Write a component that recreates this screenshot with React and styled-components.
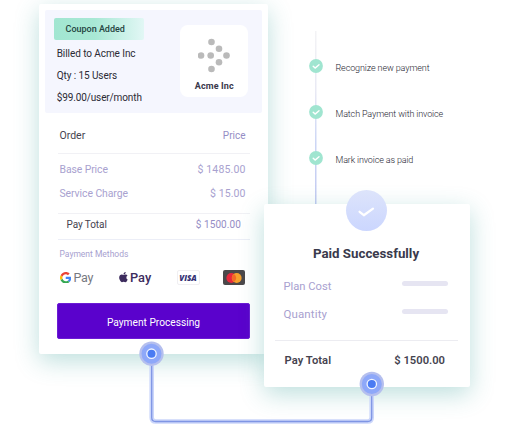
import React from "react";
import styled, { createGlobalStyle } from "styled-components";

const GlobalStyle = createGlobalStyle`
  body { margin: 0; background: #fff; }
  * { box-sizing: border-box; }
`;

const Page = styled.main`
  position: relative;
  display: flex;
  align-items: flex-start;
  width: 520px;
  height: 435px;
  padding: 4px 0 0 39px;
  overflow: hidden;
  font-family: Roboto, "Noto Sans", sans-serif;
  color: #45434f;
`;

const Card = styled.section`
  background: #fff;
  border-radius: 2px;
  box-shadow: 0 7px 24px rgba(50, 155, 148, 0.32);
`;

const InvoiceCard = styled(Card)`
  width: 228.5px;
  height: 350px;
  padding: 6px 6px 0;
  flex-shrink: 0;
`;

const Text = styled.span`
  display: block;
  white-space: pre;
  font-size: ${(p) => p.$size || 10}px;
  font-weight: ${(p) => p.$weight || 400};
  letter-spacing: ${(p) => p.$track || 0}px;
  color: ${(p) => p.$color || "inherit"};
`;

const Summary = styled.header`
  display: flex;
  justify-content: space-between;
  height: 103px;
  padding: 8px 13.5px 0 9px;
  background: #f5f6fe;
  border-radius: 2px;
`;

const Details = styled.div`
  display: flex;
  flex-direction: column;
`;

const Coupon = styled.div`
  display: flex;
  align-items: center;
  width: 90px;
  height: 22px;
  margin-bottom: 2px;
  padding-left: 11.5px;
  border-radius: 2px;
  background: linear-gradient(90deg, #a2e6d1 0%, #a8e8d5 45%, #e2f7f5 100%);
`;

const Detail = styled.div`
  display: flex;
  align-items: center;
  height: 22.2px;
  padding-left: 2.7px;
  color: #2b2a34;
`;

const CompanyTile = styled.div`
  display: flex;
  flex-direction: column;
  align-items: center;
  width: 68.5px;
  height: 72px;
  margin-top: 7px;
  padding: 13px 0 0 1px;
  border-radius: 8px;
  background: #fff;

  svg { margin: 0 0 8px; }
`;

const Body = styled.div`
  padding: 0 12px 0 12.5px;
`;

const Row = styled.div`
  display: flex;
  align-items: center;
  justify-content: space-between;
  height: ${(p) => p.$height}px;
  padding: ${(p) => p.$top || 0}px ${(p) => p.$right ?? 4}px 0 ${(p) => p.$left ?? 2}px;
`;

const Rule = styled.hr`
  height: 1px;
  margin: 0;
  border: 0;
  background: ${(p) => p.$color || "#f1f1f5"};
`;

const Charges = styled.div`
  padding: 3px 0 8px;
`;

const Methods = styled.div`
  display: flex;
  align-items: center;
  height: 18px;
  padding-left: 2px;
`;

const Wallet = styled.div`
  display: flex;
  align-items: center;
  gap: ${(p) => p.$gap}px;
  width: ${(p) => p.$width}px;
`;

const VisaBadge = styled.div`
  display: grid;
  place-items: center;
  width: 23px;
  height: 15px;
  margin-right: 23px;
  border: 1px solid #f0eff2;
  border-radius: 2px;
  color: #343174;
  font: italic 800 8px/1 "Open Sans", sans-serif;
  letter-spacing: 0;
`;

const MastercardBadge = styled.div`
  display: grid;
  place-items: center;
  width: 22.5px;
  height: 15px;
  border-radius: 2px;
  background: #4b484a;
`;

const PayButton = styled.button`
  display: grid;
  place-items: center;
  width: 193px;
  height: 36.5px;
  margin: 16px 0 0 -0.5px;
  padding: 3px 0 0;
  border: 1px solid #6c1cd4;
  border-radius: 2px;
  background: #5a02cc;
  color: #fff;
  font-family: inherit;
`;

const Side = styled.div`
  display: flex;
  flex-direction: column;
  width: 205.5px;
  margin-left: -3.5px;
  flex-shrink: 0;
`;

const Timeline = styled.ol`
  display: flex;
  flex-direction: column;
  height: 200px;
  margin: 0;
  padding: 39px 0 0 44.5px;
  list-style: none;
  background: linear-gradient(#f3f3f5, #e8e9f4 35%, #ccd6f5 65%, #c3caf1) 51px 27px / 1.5px 173px no-repeat;
`;

const Step = styled.li`
  display: flex;
  align-items: center;
  gap: 13px;
  height: 46px;
`;

const StepLabel = styled(Text)`
  margin-top: 3px;
`;

const SuccessCard = styled(Card)`
  position: relative;
  height: 183px;
  padding: 40px 12px 0 10.5px;
`;

const StatusBadge = styled.div`
  position: absolute;
  top: -14px;
  left: 81.5px;
  display: grid;
  place-items: center;
  width: 41px;
  height: 41px;
  border-radius: 50%;
  background: linear-gradient(#dde4fb, #cbd6fe);
`;

const Title = styled.h2`
  margin: 0 0 8px;
  font-size: 13.3px;
  font-weight: 700;
  line-height: 20px;
  text-align: center;
  color: #3a3a4c;
`;

const Placeholder = styled.span`
  width: 46.5px;
  height: 5px;
  margin-top: -5px;
  border-radius: 3px;
  background: #e6e5f2;
`;

const Connector = styled.svg`
  position: absolute;
  inset: 0;
  pointer-events: none;
`;

const lilac = "#a8a1cf";
const violet = "#958dc5";

const steps = [
  { label: "Recognize new payment", track: -0.11 },
  { label: "Match Payment with invoice", track: -0.13 },
  { label: "Mark invoice as paid", track: -0.14 },
];

const dots = [[13.5, 4], [21, 10.7], [3, 17.5], [12.7, 17.5], [28.5, 17.5], [21, 24.2], [13.5, 31]];

const CompanyLogo = () => (
  <svg width="32" height="35" viewBox="0 0 32 35" fill="#bababa">
    {dots.map(([x, y]) => <circle key={`${x}-${y}`} cx={x} cy={y} r="3.3" />)}
  </svg>
);

const GoogleLogo = () => (
  <svg width="11.5" height="11.5" viewBox="0 0 48 48">
    <path fill="#ea4335" d="M24 9.5c3.54 0 6.71 1.22 9.21 3.6l6.85-6.85C35.9 2.38 30.47 0 24 0 14.62 0 6.51 5.38 2.56 13.22l7.98 6.19C12.43 13.72 17.74 9.5 24 9.5z" />
    <path fill="#4285f4" d="M46.98 24.55c0-1.57-.15-3.09-.38-4.55H24v9.02h12.94c-.58 2.96-2.26 5.48-4.78 7.18l7.73 6c4.51-4.18 7.09-10.36 7.09-17.65z" />
    <path fill="#fbbc05" d="M10.53 28.59A14.5 14.5 0 0 1 9.77 24c0-1.6.27-3.14.76-4.59l-7.98-6.19A23.9 23.9 0 0 0 0 24c0 3.88.92 7.54 2.56 10.78z" />
    <path fill="#34a853" d="M24 48c6.48 0 11.93-2.13 15.89-5.81l-7.73-6c-2.15 1.45-4.92 2.3-8.16 2.3-6.26 0-11.57-4.22-13.47-9.91l-7.98 6.19C6.51 42.62 14.62 48 24 48z" />
  </svg>
);

const AppleLogo = () => (
  <svg width="9" height="11" viewBox="0 0 384 480" fill="#3d2c5e">
    <path d="M318 236c0-37 17-65 51-85-19-27-48-42-86-45-36-3-75 21-89 21-15 0-49-20-76-20C62 108 3 152 3 240c0 26 5 53 14 81 13 36 58 125 106 123 25 0 42-18 75-18 31 0 47 18 75 18 48 0 89-81 101-117-64-31-56-89-56-91zM262 73c27-32 24-61 24-73-24 2-52 17-67 35-18 20-28 44-26 71 26 2 49-11 69-33z" />
  </svg>
);

const StepCheck = () => (
  <svg width="14" height="14" viewBox="0 0 14 14">
    <circle cx="7" cy="7" r="6.9" fill="#a0e5d0" />
    <path d="M4.2 7.2 6.1 9.1 10 5.7" fill="none" stroke="#fff" strokeWidth="1.4" strokeLinecap="round" strokeLinejoin="round" />
  </svg>
);

const Node = ({ x, y }) => (
  <g transform={`translate(${x} ${y})`}>
    <circle r="12.2" fill="#b5bfee" />
    <circle r="10" fill="#8ea8f9" />
    <circle r="4.7" fill="#4a7bf3" stroke="#f1f5ff" strokeWidth="1.3" />
  </g>
);

export default function App() {
  return (
    <>
      <GlobalStyle />
      <Page>
        <InvoiceCard>
          <Summary>
            <Details>
              <Coupon><Text $size={9} $weight={500} $color="#24443f">Coupon Added</Text></Coupon>
              <Detail><Text $track={-0.07}>Billed to Acme Inc</Text></Detail>
              <Detail><Text $track={-0.08}>Qty : 15 Users</Text></Detail>
              <Detail><Text $track={-0.12}>$99.00/user/month</Text></Detail>
            </Details>
            <CompanyTile>
              <CompanyLogo />
              <Text $size={9} $weight={700} $track={0.12} $color="#39374a">Acme Inc</Text>
            </CompanyTile>
          </Summary>
          <Body>
            <Row $height={40} $top={4}>
              <Text $size={10.5}>Order</Text>
              <Text $color={violet}>Price</Text>
            </Row>
            <Rule />
            <Charges>
              <Row $height={24}>
                <Text $size={10.4} $track={-0.08} $color={lilac}>Base Price</Text>
                <Text $size={10.5} $track={0.15} $color={lilac}>$ 1485.00</Text>
              </Row>
              <Row $height={24}>
                <Text $size={10.4} $track={-0.06} $color={lilac}>Service Charge</Text>
                <Text $size={10.5} $track={0.08} $color={lilac}>$ 15.00</Text>
              </Row>
            </Charges>
            <Rule />
            <Row $height={20} $left={9} $right={8.5}>
              <Text $track={-0.08}>Pay Total</Text>
              <Text $track={0.1} $color={violet}>$ 1500.00</Text>
            </Row>
            <Row $height={4.5} />
            <Rule $color="#eceef7" />
            <Row $height={29}>
              <Text $size={8.5} $color={lilac}>Payment Methods</Text>
            </Row>
            <Methods>
              <Wallet $gap={2.5} $width={59.5}>
                <GoogleLogo />
                <Text $size={12.5} $track={-0.25} $color="#77797f">Pay</Text>
              </Wallet>
              <Wallet $gap={2} $width={57.5}>
                <AppleLogo />
                <Text $size={12.8} $weight={500} $color="#3d2c5e">Pay</Text>
              </Wallet>
              <VisaBadge>VISA</VisaBadge>
              <MastercardBadge>
                <svg width="16" height="10" viewBox="0 0 16 10">
                  <circle cx="5.3" cy="5" r="4.9" fill="#e8283c" />
                  <circle cx="10.7" cy="5" r="4.9" fill="#f6a02c" />
                  <path d="M8 .9a4.9 4.9 0 0 1 0 8.2 4.9 4.9 0 0 1 0-8.2z" fill="#f26a27" />
                </svg>
              </MastercardBadge>
            </Methods>
            <PayButton><Text $size={10.2} $weight={400}>Payment Processing</Text></PayButton>
          </Body>
        </InvoiceCard>
        <Side>
          <Timeline>
            {steps.map((step) => (
              <Step key={step.label}>
                <StepCheck />
                <StepLabel $size={9} $weight={300} $track={step.track} $color="#252530">{step.label}</StepLabel>
              </Step>
            ))}
          </Timeline>
          <SuccessCard>
            <StatusBadge>
              <svg width="19" height="14" viewBox="0 0 19 14">
                <path d="M2.6 7.8 6.8 11.2 16 4.6" fill="none" stroke="#fff" strokeWidth="2.3" strokeLinecap="round" strokeLinejoin="round" />
              </svg>
            </StatusBadge>
            <Title>Paid Successfully</Title>
            <Row $height={28} $left={9} $right={9.5}>
              <Text $size={11.2} $color={lilac}>Plan Cost</Text>
              <Placeholder />
            </Row>
            <Row $height={28} $left={9} $right={9.5}>
              <Text $size={11.5} $track={0.12} $color={lilac}>Quantity</Text>
              <Placeholder />
            </Row>
            <Row $height={12} />
            <Rule $color="#ececf1" />
            <Row $height={39} $left={10} $right={12.5}>
              <Text $size={11.2} $weight={600} $track={0.05}>Pay Total</Text>
              <Text $size={11.2} $weight={600}>$ 1500.00</Text>
            </Row>
          </SuccessCard>
        </Side>
        <Connector width="520" height="435" viewBox="0 0 520 435" fill="none">
          <path d="M151.7 354V417.5Q151.7 421.5 155.7 421.5H367.7Q371.7 421.5 371.7 417.5V384" stroke="#cbd6fa" strokeWidth="4.6" />
          <path d="M151.7 354V417.5Q151.7 421.5 155.7 421.5H367.7Q371.7 421.5 371.7 417.5V384" stroke="#7f95e4" strokeWidth="1.3" />
          <Node x={151.5} y={353.7} />
          <Node x={371.8} y={384} />
        </Connector>
      </Page>
    </>
  );
}
